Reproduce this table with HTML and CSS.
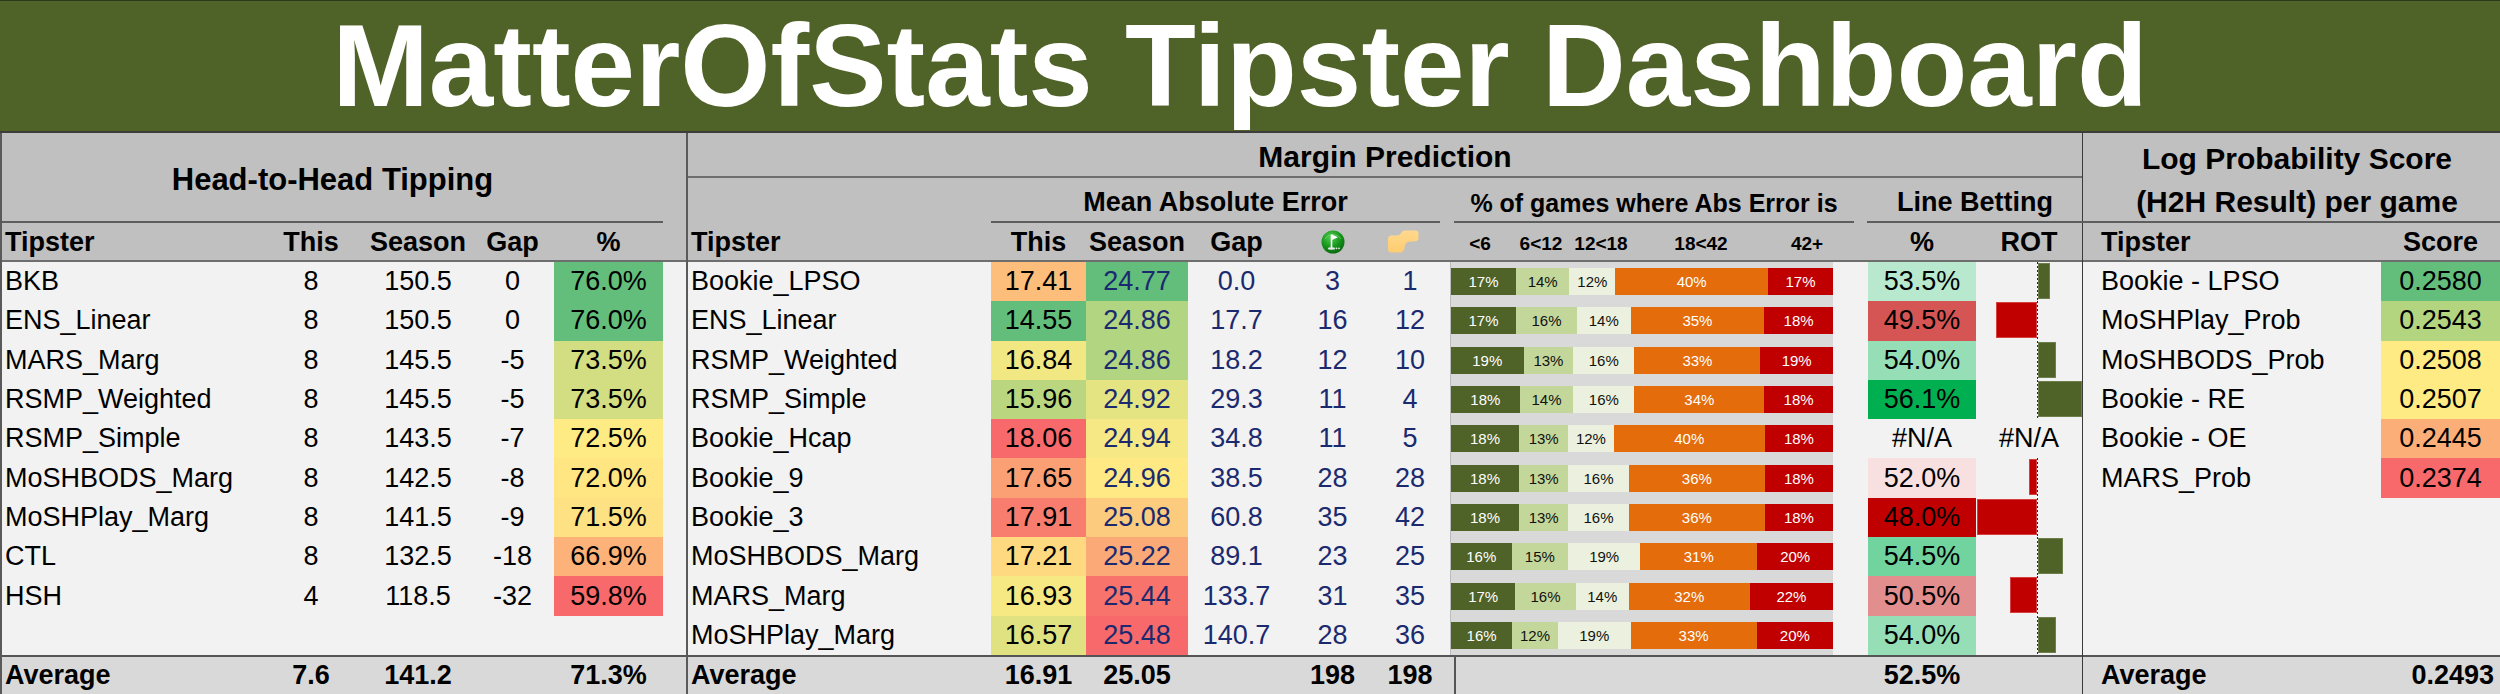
FILE: index.html
```html
<!DOCTYPE html>
<html>
<head>
<meta charset="utf-8">
<link rel="stylesheet" href="styles.css">
</head>
<body>
<div class="title">MatterOfStats Tipster Dashboard</div>
<div class="board">
  <section class="panel h2h">
    <div class="hdr h2h-top"><div class="grouphead">Head-to-Head Tipping</div></div>
    <div class="row hdr colhead h2h-cols">
      <div class="c l">Tipster</div><div class="c">This</div><div class="c">Season</div><div class="c gapc">Gap</div><div class="c">%</div><div></div>
    </div>
    <div class="row h2h-cols"><div class="c l">BKB</div><div class="c">8</div><div class="c">150.5</div><div class="c gapc">0</div><div class="c" style="background:rgb(99,190,123)">76.0%</div><div></div></div>
    <div class="row h2h-cols"><div class="c l">ENS_Linear</div><div class="c">8</div><div class="c">150.5</div><div class="c gapc">0</div><div class="c" style="background:rgb(99,190,123)">76.0%</div><div></div></div>
    <div class="row h2h-cols"><div class="c l">MARS_Marg</div><div class="c">8</div><div class="c">145.5</div><div class="c gapc">-5</div><div class="c" style="background:rgb(210,222,129)">73.5%</div><div></div></div>
    <div class="row h2h-cols"><div class="c l">RSMP_Weighted</div><div class="c">8</div><div class="c">145.5</div><div class="c gapc">-5</div><div class="c" style="background:rgb(210,222,129)">73.5%</div><div></div></div>
    <div class="row h2h-cols"><div class="c l">RSMP_Simple</div><div class="c">8</div><div class="c">143.5</div><div class="c gapc">-7</div><div class="c" style="background:rgb(255,235,132)">72.5%</div><div></div></div>
    <div class="row h2h-cols"><div class="c l">MoSHBODS_Marg</div><div class="c">8</div><div class="c">142.5</div><div class="c gapc">-8</div><div class="c" style="background:rgb(255,230,131)">72.0%</div><div></div></div>
    <div class="row h2h-cols"><div class="c l">MoSHPlay_Marg</div><div class="c">8</div><div class="c">141.5</div><div class="c gapc">-9</div><div class="c" style="background:rgb(254,225,130)">71.5%</div><div></div></div>
    <div class="row h2h-cols"><div class="c l">CTL</div><div class="c">8</div><div class="c">132.5</div><div class="c gapc">-18</div><div class="c" style="background:rgb(252,178,121)">66.9%</div><div></div></div>
    <div class="row h2h-cols"><div class="c l">HSH</div><div class="c">4</div><div class="c">118.5</div><div class="c gapc">-32</div><div class="c" style="background:rgb(248,105,107)">59.8%</div><div></div></div>
    <div class="row h2h-cols"></div>
    <div class="row avg h2h-cols"><div class="c l">Average</div><div class="c">7.6</div><div class="c">141.2</div><div class="c gapc"></div><div class="c">71.3%</div><div></div></div>
  </section>

  <section class="panel mid">
    <div class="hdr mid-top">Margin Prediction</div>
    <div class="row hdr mid-sub mid-cols">
      <div class="sg mae">Mean Absolute Error</div>
      <div class="sg histg">% of games where Abs Error is</div>
      <div class="sg lineg">Line Betting</div>
    </div>
    <div class="row hdr colhead mid-cols">
      <div class="c l">Tipster</div><div class="c">This</div><div class="c">Season</div><div class="c">Gap</div>
      <div class="c icon">
        <svg width="24" height="24" viewBox="0 0 24 24">
          <defs>
            <radialGradient id="gf" cx="0.4" cy="0.3" r="0.75">
              <stop offset="0" stop-color="#4fcf4f"/>
              <stop offset="0.6" stop-color="#14921a"/>
              <stop offset="1" stop-color="#0a6410"/>
            </radialGradient>
          </defs>
          <circle cx="12" cy="12" r="11.5" fill="url(#gf)"/>
          <path d="M4 9 A9 8 0 0 1 20 9" fill="none" stroke="#8fe08f" stroke-width="1" opacity="0.5"/>
          <line x1="10.5" y1="4.5" x2="10.5" y2="18" stroke="#fff" stroke-width="1.6"/>
          <path d="M11 4.5 L17 7.2 L11 10 Z" fill="#fff"/>
          <ellipse cx="10.5" cy="18.5" rx="3.6" ry="1.2" fill="#e8e8e8"/>
          <circle cx="15.5" cy="18.3" r="0.9" fill="#e8e8e8"/>
          <circle cx="18" cy="18.3" r="0.9" fill="#e8e8e8"/>
        </svg>
      </div>
      <div class="c icon hand">
        <svg width="32" height="23" viewBox="0 0 32 23">
          <defs>
            <linearGradient id="gh" x1="0" y1="0" x2="0" y2="1">
              <stop offset="0" stop-color="#ffd98e"/>
              <stop offset="1" stop-color="#ffcc70"/>
            </linearGradient>
          </defs>
          <path d="M1 9 Q1 5.5 4.5 5.5 L10 5.5 Q12.5 5.5 13.8 3.5 L15 1.8 Q16 0.5 18 0.5 L28.5 0.5 Q31.5 0.5 31.5 3.5 L31.5 8 Q31.5 11 28.5 11.2 L22 11.8 Q19 12.2 18 15 L17.2 18.5 Q16.3 22.5 13 22.5 L4.5 22.5 Q1 22.5 1 19 Z" fill="url(#gh)"/>
        </svg>
      </div>
      <div></div>
      <div class="histlabels">
        <span style="width:60px">&lt;6</span><span style="width:62px">6&lt;12</span><span style="width:58px">12&lt;18</span><span style="width:142px">18&lt;42</span><span style="width:70px">42+</span>
      </div>
      <div class="c">%</div><div class="c">ROT</div>
    </div>

    <div class="row mid-cols"><div class="c l">Bookie_LPSO</div><div class="c" style="background:rgb(253,190,123)">17.41</div><div class="c navy" style="background:rgb(99,190,123)">24.77</div><div class="c navy">0.0</div><div class="c navy">3</div><div class="c navy">1</div><div></div>
      <div class="hist"><div class="bar"><span class="s1" style="flex-grow:17">17%</span><span class="s2" style="flex-grow:14">14%</span><span class="s3" style="flex-grow:12">12%</span><span class="s4" style="flex-grow:40">40%</span><span class="s5" style="flex-grow:17">17%</span></div></div><div></div>
      <div class="c" style="background:rgb(184,233,206)">53.5%</div>
      <div class="rot"><div class="neg"></div><div class="pos"><div class="rbar p" style="width:12px"></div></div></div></div>

    <div class="row mid-cols"><div class="c l">ENS_Linear</div><div class="c" style="background:rgb(99,190,123)">14.55</div><div class="c navy" style="background:rgb(177,213,128)">24.86</div><div class="c navy">17.7</div><div class="c navy">16</div><div class="c navy">12</div><div></div>
      <div class="hist"><div class="bar"><span class="s1" style="flex-grow:17">17%</span><span class="s2" style="flex-grow:16">16%</span><span class="s3" style="flex-grow:14">14%</span><span class="s4" style="flex-grow:35">35%</span><span class="s5" style="flex-grow:18">18%</span></div></div><div></div>
      <div class="c" style="background:rgb(213,85,85)">49.5%</div>
      <div class="rot"><div class="neg"><div class="rbar n" style="width:41px"></div></div><div class="pos"></div></div></div>

    <div class="row mid-cols"><div class="c l">RSMP_Weighted</div><div class="c" style="background:rgb(241,231,131)">16.84</div><div class="c navy" style="background:rgb(177,213,128)">24.86</div><div class="c navy">18.2</div><div class="c navy">12</div><div class="c navy">10</div><div></div>
      <div class="hist"><div class="bar"><span class="s1" style="flex-grow:19">19%</span><span class="s2" style="flex-grow:13">13%</span><span class="s3" style="flex-grow:16">16%</span><span class="s4" style="flex-grow:33">33%</span><span class="s5" style="flex-grow:19">19%</span></div></div><div></div>
      <div class="c" style="background:rgb(149,222,182)">54.0%</div>
      <div class="rot"><div class="neg"></div><div class="pos"><div class="rbar p" style="width:18px"></div></div></div></div>

    <div class="row mid-cols"><div class="c l">RSMP_Simple</div><div class="c" style="background:rgb(186,215,128)">15.96</div><div class="c navy" style="background:rgb(229,228,131)">24.92</div><div class="c navy">29.3</div><div class="c navy">11</div><div class="c navy">4</div><div></div>
      <div class="hist"><div class="bar"><span class="s1" style="flex-grow:18">18%</span><span class="s2" style="flex-grow:14">14%</span><span class="s3" style="flex-grow:16">16%</span><span class="s4" style="flex-grow:34">34%</span><span class="s5" style="flex-grow:18">18%</span></div></div><div></div>
      <div class="c" style="background:rgb(0,176,80)">56.1%</div>
      <div class="rot"><div class="neg"></div><div class="pos"><div class="rbar p" style="width:44px"></div></div></div></div>

    <div class="row mid-cols"><div class="c l">Bookie_Hcap</div><div class="c" style="background:rgb(248,105,107)">18.06</div><div class="c navy" style="background:rgb(246,232,132)">24.94</div><div class="c navy">34.8</div><div class="c navy">11</div><div class="c navy">5</div><div></div>
      <div class="hist"><div class="bar"><span class="s1" style="flex-grow:18">18%</span><span class="s2" style="flex-grow:13">13%</span><span class="s3" style="flex-grow:12">12%</span><span class="s4" style="flex-grow:40">40%</span><span class="s5" style="flex-grow:18">18%</span></div></div><div></div>
      <div class="c">#N/A</div>
      <div class="c">#N/A</div></div>

    <div class="row mid-cols"><div class="c l">Bookie_9</div><div class="c" style="background:rgb(251,159,117)">17.65</div><div class="c navy" style="background:rgb(255,233,132)">24.96</div><div class="c navy">38.5</div><div class="c navy">28</div><div class="c navy">28</div><div></div>
      <div class="hist"><div class="bar"><span class="s1" style="flex-grow:18">18%</span><span class="s2" style="flex-grow:13">13%</span><span class="s3" style="flex-grow:16">16%</span><span class="s4" style="flex-grow:36">36%</span><span class="s5" style="flex-grow:18">18%</span></div></div><div></div>
      <div class="c" style="background:rgb(248,224,224)">52.0%</div>
      <div class="rot"><div class="neg"><div class="rbar n" style="width:8px"></div></div><div class="pos"></div></div></div>

    <div class="row mid-cols"><div class="c l">Bookie_3</div><div class="c" style="background:rgb(249,125,111)">17.91</div><div class="c navy" style="background:rgb(253,203,126)">25.08</div><div class="c navy">60.8</div><div class="c navy">35</div><div class="c navy">42</div><div></div>
      <div class="hist"><div class="bar"><span class="s1" style="flex-grow:18">18%</span><span class="s2" style="flex-grow:13">13%</span><span class="s3" style="flex-grow:16">16%</span><span class="s4" style="flex-grow:36">36%</span><span class="s5" style="flex-grow:18">18%</span></div></div><div></div>
      <div class="c" style="background:rgb(192,0,0)">48.0%</div>
      <div class="rot"><div class="neg"><div class="rbar n" style="width:60px"></div></div><div class="pos"></div></div></div>

    <div class="row mid-cols"><div class="c l">MoSHBODS_Marg</div><div class="c" style="background:rgb(254,217,128)">17.21</div><div class="c navy" style="background:rgb(251,169,119)">25.22</div><div class="c navy">89.1</div><div class="c navy">23</div><div class="c navy">25</div><div></div>
      <div class="hist"><div class="bar"><span class="s1" style="flex-grow:16">16%</span><span class="s2" style="flex-grow:15">15%</span><span class="s3" style="flex-grow:19">19%</span><span class="s4" style="flex-grow:31">31%</span><span class="s5" style="flex-grow:20">20%</span></div></div><div></div>
      <div class="c" style="background:rgb(113,211,158)">54.5%</div>
      <div class="rot"><div class="neg"></div><div class="pos"><div class="rbar p" style="width:25px"></div></div></div></div>

    <div class="row mid-cols"><div class="c l">MARS_Marg</div><div class="c" style="background:rgb(246,232,131)">16.93</div><div class="c navy" style="background:rgb(249,115,109)">25.44</div><div class="c navy">133.7</div><div class="c navy">31</div><div class="c navy">35</div><div></div>
      <div class="hist"><div class="bar"><span class="s1" style="flex-grow:17">17%</span><span class="s2" style="flex-grow:16">16%</span><span class="s3" style="flex-grow:14">14%</span><span class="s4" style="flex-grow:32">32%</span><span class="s5" style="flex-grow:22">22%</span></div></div><div></div>
      <div class="c" style="background:rgb(227,142,142)">50.5%</div>
      <div class="rot"><div class="neg"><div class="rbar n" style="width:27px"></div></div><div class="pos"></div></div></div>

    <div class="row mid-cols"><div class="c l">MoSHPlay_Marg</div><div class="c" style="background:rgb(224,226,130)">16.57</div><div class="c navy" style="background:rgb(248,105,107)">25.48</div><div class="c navy">140.7</div><div class="c navy">28</div><div class="c navy">36</div><div></div>
      <div class="hist"><div class="bar"><span class="s1" style="flex-grow:16">16%</span><span class="s2" style="flex-grow:12">12%</span><span class="s3" style="flex-grow:19">19%</span><span class="s4" style="flex-grow:33">33%</span><span class="s5" style="flex-grow:20">20%</span></div></div><div></div>
      <div class="c" style="background:rgb(149,222,182)">54.0%</div>
      <div class="rot"><div class="neg"></div><div class="pos"><div class="rbar p" style="width:18px"></div></div></div></div>

    <div class="row avg mid-cols"><div class="c l">Average</div><div class="c">16.91</div><div class="c">25.05</div><div class="c"></div><div class="c">198</div><div class="c">198</div><div></div>
      <div class="avghist"></div><div></div><div class="c">52.5%</div><div></div></div>
  </section>

  <section class="panel lps">
    <div class="hdr lps-top">Log Probability Score<br>(H2H Result) per game</div>
    <div class="row hdr colhead lps-cols"><div class="c l">Tipster</div><div class="c">Score</div></div>
    <div class="row lps-cols"><div class="c l">Bookie - LPSO</div><div class="c" style="background:rgb(99,190,123)">0.2580</div></div>
    <div class="row lps-cols"><div class="c l">MoSHPlay_Prob</div><div class="c" style="background:rgb(179,213,128)">0.2543</div></div>
    <div class="row lps-cols"><div class="c l">MoSHBODS_Prob</div><div class="c" style="background:rgb(254,235,132)">0.2508</div></div>
    <div class="row lps-cols"><div class="c l">Bookie - RE</div><div class="c" style="background:rgb(255,235,132)">0.2507</div></div>
    <div class="row lps-cols"><div class="c l">Bookie - OE</div><div class="c" style="background:rgb(252,174,120)">0.2445</div></div>
    <div class="row lps-cols"><div class="c l">MARS_Prob</div><div class="c" style="background:rgb(248,105,107)">0.2374</div></div>
    <div class="row lps-cols"></div>
    <div class="row lps-cols"></div>
    <div class="row lps-cols"></div>
    <div class="row lps-cols"></div>
    <div class="row avg lps-cols"><div class="c l">Average</div><div class="c r">0.2493</div></div>
  </section>
</div>
</body>
</html>
```

FILE: styles.css
```css
html, body {
  margin: 0;
  padding: 0;
}
body {
  width: 2500px;
  height: 694px;
  overflow: hidden;
  background: #f2f2f2;
  font-family: "Liberation Sans", Arial, sans-serif;
  color: #000;
}

.title {
  box-sizing: border-box;
  height: 133px;
  background: #4f6228;
  color: #fff;
  font-weight: 700;
  font-size: 116px;
  line-height: 1;
  display: flex;
  align-items: center;
  justify-content: center;
  padding-right: 20px;
  border-top: 1px solid #2e3a17;
  border-bottom: 2px solid #3c3c3c;
  white-space: nowrap;
}

.board {
  display: flex;
  height: 561px;
}

.panel {
  box-sizing: border-box;
  display: flex;
  flex-direction: column;
  background: #f2f2f2;
}

.h2h {
  width: 688px;
  border-left: 2px solid #5a5a5a;
  border-right: 2px solid #5a5a5a;
}
.mid {
  width: 1395px;
  border-right: 1px solid #3a3a3a;
}
.lps {
  width: 417px;
}

.hdr {
  background: #c0c0c0;
}

.row {
  display: grid;
  height: 39.3px;
  font-size: 27px;
  flex: none;
}
.row > div {
  display: flex;
  align-items: center;
  white-space: nowrap;
}
.c {
  justify-content: center;
}
.c.l {
  justify-content: flex-start;
  padding-left: 3px;
}
.c.r {
  justify-content: flex-end;
  padding-right: 6px;
}
.navy {
  color: #1b2a6e;
}

.colhead {
  box-sizing: border-box;
  height: 39px;
  font-weight: 700;
  border-bottom: 2px solid #6e6e6e;
  padding-top: 2px;
}

.avg {
  box-sizing: border-box;
  height: 39px;
  background: #d9d9d9;
  font-weight: 700;
  border-top: 2px solid #555;
}

/* Head-to-head */
.h2h-cols {
  grid-template-columns: 261px 96px 118px 77px 109px 23px;
}
.h2h .gapc {
  padding-right: 6px;
}
.h2h-top {
  height: 90px;
  flex: none;
}
.grouphead {
  box-sizing: border-box;
  width: 661px;
  height: 90px;
  border-bottom: 2px solid #5e5e5e;
  display: flex;
  align-items: center;
  justify-content: center;
  font-weight: 700;
  font-size: 31px;
  padding-top: 6px;
}

/* Margin prediction */
.mid-cols {
  grid-template-columns: 303px 95px 102px 97px 95px 60px 10px 383px 35px 108px 106px;
}
.mid-top {
  box-sizing: border-box;
  height: 45px;
  flex: none;
  border-bottom: 2px solid #6e6e6e;
  display: flex;
  align-items: center;
  justify-content: center;
  font-weight: 700;
  font-size: 30px;
  padding-top: 5px;
}
.mid-sub {
  height: 45px;
  font-weight: 700;
  font-size: 27px;
}
.mid-sub > .sg {
  box-sizing: border-box;
  justify-content: center;
  align-items: flex-end;
  padding-bottom: 3px;
  border-bottom: 2px solid #5e5e5e;
}
.mae {
  grid-column: 2 / 7;
}
.histg {
  grid-column: 7 / 10;
  margin: 0 14px 0 14px;
  font-size: 25px;
}
.lineg {
  grid-column: 10 / 12;
  margin-left: -1px;
  margin-right: -1px;
}
.icon {
  padding-bottom: 2px;
}
.c.hand {
  justify-content: flex-start;
  padding-left: 7px;
}
.histlabels {
  grid-column: 8 / 10;
  font-size: 19px;
  align-items: flex-end !important;
  padding-bottom: 5px;
}
.histlabels span {
  display: inline-block;
  text-align: center;
  flex: none;
}

.hist {
  box-sizing: border-box;
  background: #d9d9d9;
  border-left: 1px solid #bcbcbc;
}
.bar {
  display: flex;
  width: 100%;
  height: 27px;
}
.bar span {
  flex-basis: 0;
  display: flex;
  align-items: center;
  justify-content: center;
  font-size: 15px;
  overflow: hidden;
}
.s1 { background: #4f6228; color: #fff; }
.s2 { background: #c4d79b; color: #111; }
.s3 { background: #ebf1de; color: #111; }
.s4 { background: #e46c0a; color: #fff; }
.s5 { background: #c00000; color: #fff; }

.rot {
  display: grid !important;
  grid-template-columns: 61px 45px;
  align-items: stretch !important;
}
.neg {
  display: flex;
  justify-content: flex-end;
  align-items: flex-start;
}
.pos {
  display: flex;
  align-items: flex-start;
  background-image: linear-gradient(#2a2a2a 50%, #ffffff 50%);
  background-size: 1px 4px;
  background-repeat: repeat-y;
  padding-left: 1px;
}
.rbar {
  height: 36px;
  margin-top: 1px;
  box-sizing: border-box;
}
.rbar.p { background: #4f6228; border: 1px solid #6f7f4c; }
.rbar.n { background: #c00000; border: 1px solid #d84040; }

.avghist {
  box-sizing: border-box;
  margin-left: 4px;
  border-left: 2px solid #555;
}

/* Log probability */
.lps-cols {
  grid-template-columns: 298px 119px;
}
.lps-cols .c.l {
  padding-left: 18px;
}
.lps-top {
  box-sizing: border-box;
  height: 90px;
  flex: none;
  border-bottom: 2px solid #5e5e5e;
  text-align: center;
  font-weight: 700;
  font-size: 30px;
  line-height: 43px;
  padding-top: 4px;
  padding-left: 11px;
  white-space: nowrap;
}
```
